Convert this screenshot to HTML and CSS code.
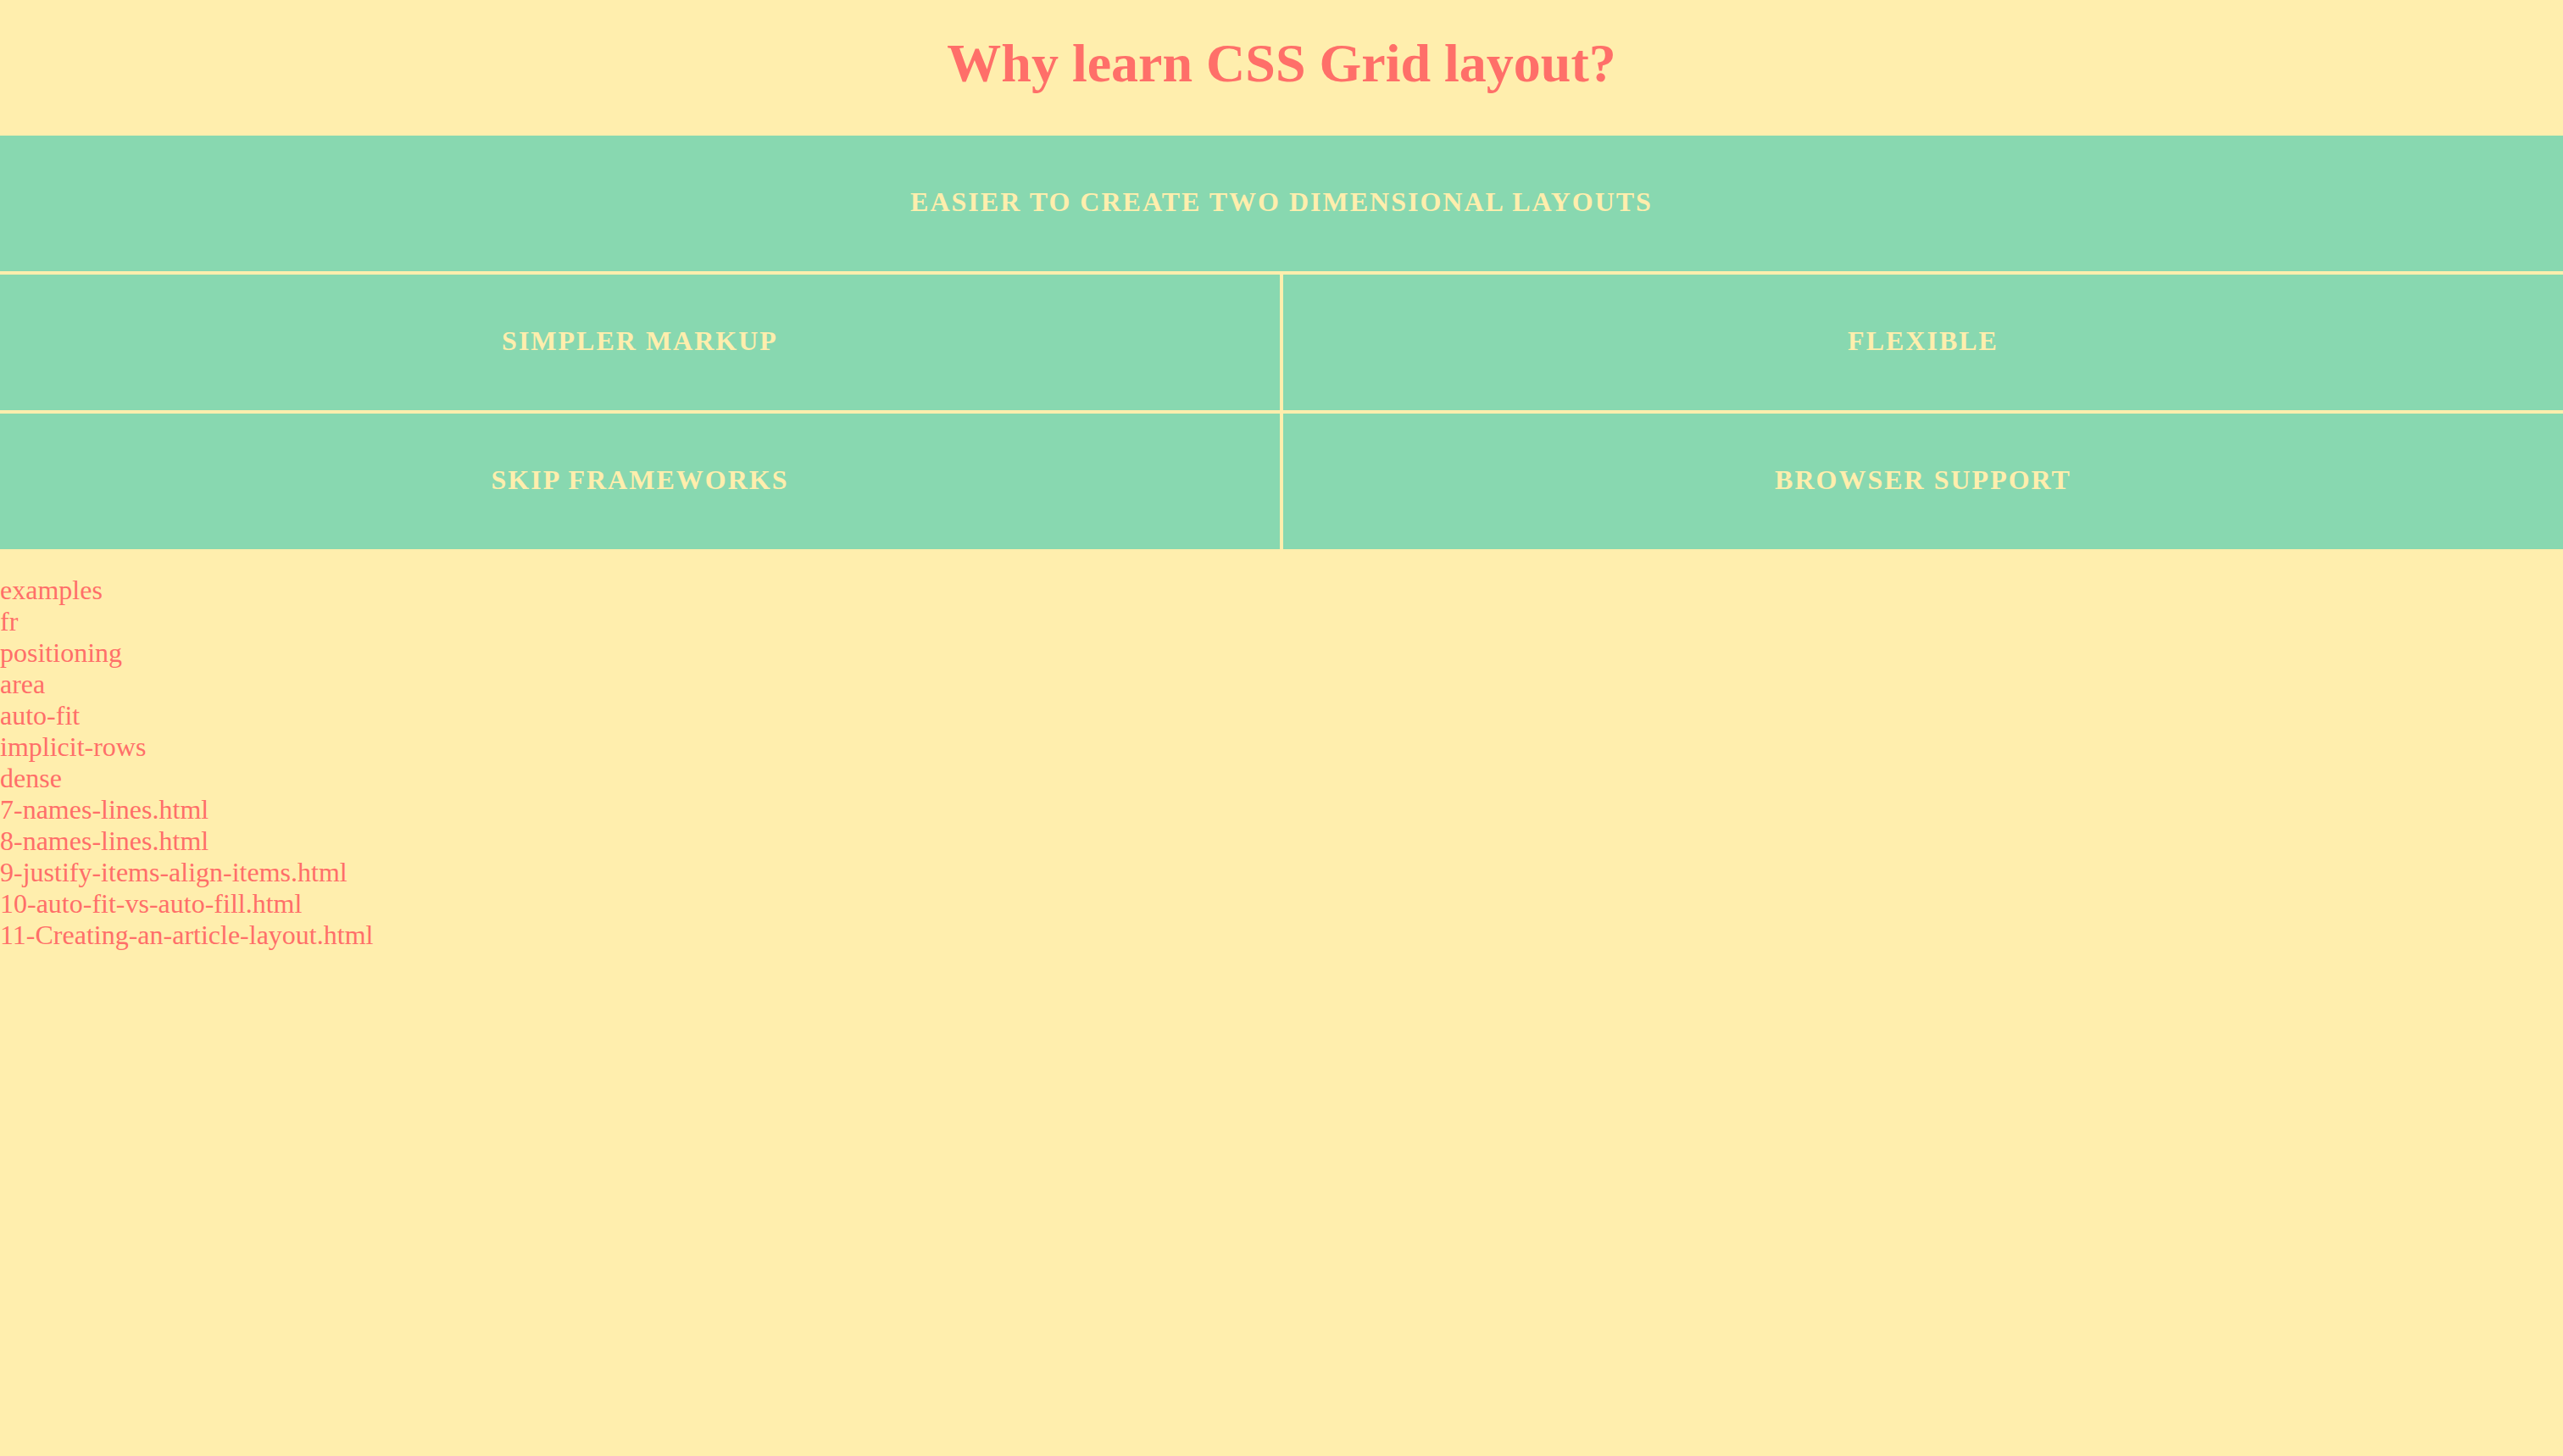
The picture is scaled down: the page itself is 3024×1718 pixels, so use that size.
FILE: index.html
```html
<!DOCTYPE html>
<html lang="en">
<head>
<meta charset="utf-8">
<title>Why learn CSS Grid layout?</title>
<link rel="stylesheet" href="styles.css">
</head>
<body>
<h1 class="title">Why learn CSS Grid layout?</h1>
<div class="grid">
  <div class="item item-wide">Easier to create two dimensional layouts</div>
  <div class="item">Simpler markup</div>
  <div class="item">Flexible</div>
  <div class="item">Skip frameworks</div>
  <div class="item">Browser support</div>
</div>
<ul class="links">
  <li><a href="#">examples</a></li>
  <li><a href="#">fr</a></li>
  <li><a href="#">positioning</a></li>
  <li><a href="#">area</a></li>
  <li><a href="#">auto-fit</a></li>
  <li><a href="#">implicit-rows</a></li>
  <li><a href="#">dense</a></li>
  <li><a href="#">7-names-lines.html</a></li>
  <li><a href="#">8-names-lines.html</a></li>
  <li><a href="#">9-justify-items-align-items.html</a></li>
  <li><a href="#">10-auto-fit-vs-auto-fill.html</a></li>
  <li><a href="#">11-Creating-an-article-layout.html</a></li>
</ul>
</body>
</html>
```
FILE: styles.css
```css
html, body {
  margin: 0;
  padding: 0;
}
body {
  background: #ffeead;
  color: #ff6f69;
  font-family: "Liberation Serif", "Times New Roman", serif;
  font-size: 32px;
  min-height: 1718px;
}
.title {
  font-size: 64px;
  font-weight: bold;
  text-align: center;
  margin: 38px 0 48px;
  color: #ff6f69;
}
.grid {
  display: grid;
  grid-template-columns: 1fr 1fr;
  grid-auto-rows: 160px;
  gap: 4px;
}
.item {
  background: #88d8b0;
  color: #ffeead;
  display: flex;
  align-items: center;
  justify-content: center;
  padding-bottom: 4px;
  box-sizing: border-box;
  text-transform: uppercase;
  font-weight: bold;
  letter-spacing: 2px;
  font-size: 32px;
}
.item-wide {
  grid-column: 1 / -1;
}
.links {
  list-style: none;
  margin: 30px 0 32px;
  padding: 0;
}
.links a {
  color: #ff6f69;
  text-decoration: none;
}
```
